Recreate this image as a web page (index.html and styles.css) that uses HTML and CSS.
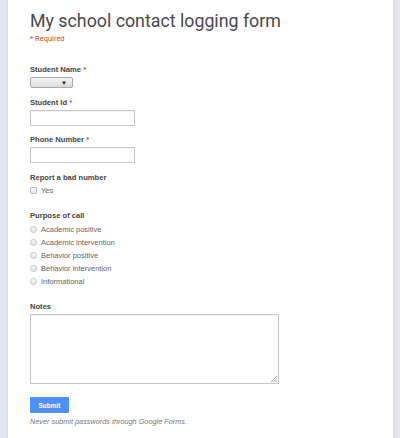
FILE: index.html
```html
<!DOCTYPE html>
<html lang="en">
<head>
  <meta charset="UTF-8" />
  <title>My school contact logging form</title>
  <link rel="stylesheet" href="styles.css">
</head>
<body>

  <div class="card">
    <h1 class="title">My school contact logging form</h1>
    <div class="required-note">* Required</div>

    <form class="form">
      <div class="item">
        <label class="label">Student Name <span class="req">*</span></label>
        <div class="select"><span class="arrow">&#9660;</span></div>
      </div>

      <div class="item">
        <label class="label">Student Id <span class="req">*</span></label>
        <div class="text-input"></div>
      </div>

      <div class="item">
        <label class="label">Phone Number <span class="req">*</span></label>
        <div class="text-input"></div>
      </div>

      <div class="item item-choices">
        <label class="label">Report a bad number</label>
        <div class="choices">
          <div class="choice"><span class="box"></span>Yes</div>
        </div>
      </div>

      <div class="item item-choices">
        <label class="label">Purpose of call</label>
        <div class="choices">
          <div class="choice"><span class="radio"></span>Academic positive</div>
          <div class="choice"><span class="radio"></span>Academic intervention</div>
          <div class="choice"><span class="radio"></span>Behavior positive</div>
          <div class="choice"><span class="radio"></span>Behavior intervention</div>
          <div class="choice"><span class="radio"></span>Informational</div>
        </div>
      </div>

      <div class="item">
        <label class="label">Notes</label>
        <div class="textarea">
          <svg class="grip" width="6" height="6" viewBox="0 0 6 6">
            <path d="M6 0 L0 6 M6 2.5 L2.5 6 M6 4.5 L4.5 6" stroke="#999" stroke-width="0.8"/>
          </svg>
        </div>
      </div>

      <div class="submit-row">
        <button type="button" class="submit">Submit</button>
        <p class="warning">Never submit passwords through Google Forms.</p>
      </div>
    </form>
  </div>

</body>
</html>
```

FILE: styles.css
```css
* {
  box-sizing: border-box;
  margin: 0;
  padding: 0;
}

body {
  background: #e4e7f1;
  font-family: 'Liberation Sans', Arial, sans-serif;
  height: 438px;
  overflow: hidden;
}

.card {
  margin: 0 7px 0 8px;
  height: 100%;
  background: #fff;
  padding: 9px 22px 0;
  box-shadow: 0 0 3px rgba(0,0,0,0.12);
}

.title {
  font-family: 'Roboto', sans-serif;
  font-weight: 400;
  font-size: 17.8px;
  line-height: 24px;
  color: #4a4a4a;
}

.required-note {
  font-family: 'Roboto', sans-serif;
  font-size: 7.5px;
  color: #d6482f;
  margin-top: 1px;
}

.form {
  display: flex;
  flex-direction: column;
  margin-top: 22px;
}

.item {
  margin-bottom: 9.5px;
}

.item-choices {
  margin-bottom: 16px;
}

.label {
  display: block;
  font-weight: bold;
  font-size: 7.6px;
  line-height: 10px;
  color: #444;
  margin-bottom: 2px;
}

.req {
  color: #d6482f;
}

.select {
  width: 43px;
  height: 11px;
  border: 1px solid #aaa;
  border-radius: 2px;
  background: linear-gradient(#f4f4f4, #dcdcdc);
  display: flex;
  justify-content: flex-end;
  align-items: center;
  padding-right: 5px;
}

.arrow {
  font-size: 6px;
  color: #222;
}

.text-input {
  width: 105px;
  height: 16px;
  border: 1px solid #c8c8c8;
  box-shadow: inset 0 1px 1px rgba(0,0,0,0.06);
}

.choices {
  display: flex;
  flex-direction: column;
  gap: 4px;
  margin-top: 3.5px;
}

.choice {
  display: flex;
  align-items: center;
  gap: 4px;
  font-size: 7.5px;
  line-height: 9px;
  color: #666;
}

.box {
  width: 7px;
  height: 7px;
  border: 1px solid #bbb;
  border-radius: 1px;
  background: linear-gradient(#fafafa, #e8e8e8);
}

.radio {
  width: 7px;
  height: 7px;
  border: 1px solid #c4c4c4;
  border-radius: 50%;
  background: linear-gradient(#fafafa, #e4e4e4);
}

.textarea {
  position: relative;
  width: 249px;
  height: 70px;
  border: 1px solid #c8c8c8;
  box-shadow: inset 0 1px 1px rgba(0,0,0,0.06);
}

.grip {
  position: absolute;
  right: 1px;
  bottom: 1px;
}

.submit-row {
  margin-top: 4px;
}

.submit {
  display: block;
  width: 39px;
  height: 16px;
  border: none;
  border-radius: 1px;
  background: #4d90fe;
  color: #fff;
  font-family: 'Liberation Sans', Arial, sans-serif;
  font-weight: bold;
  font-size: 6.5px;
}

.warning {
  font-style: italic;
  font-size: 7.3px;
  line-height: 9px;
  color: #777;
  margin-top: 4px;
}
```
